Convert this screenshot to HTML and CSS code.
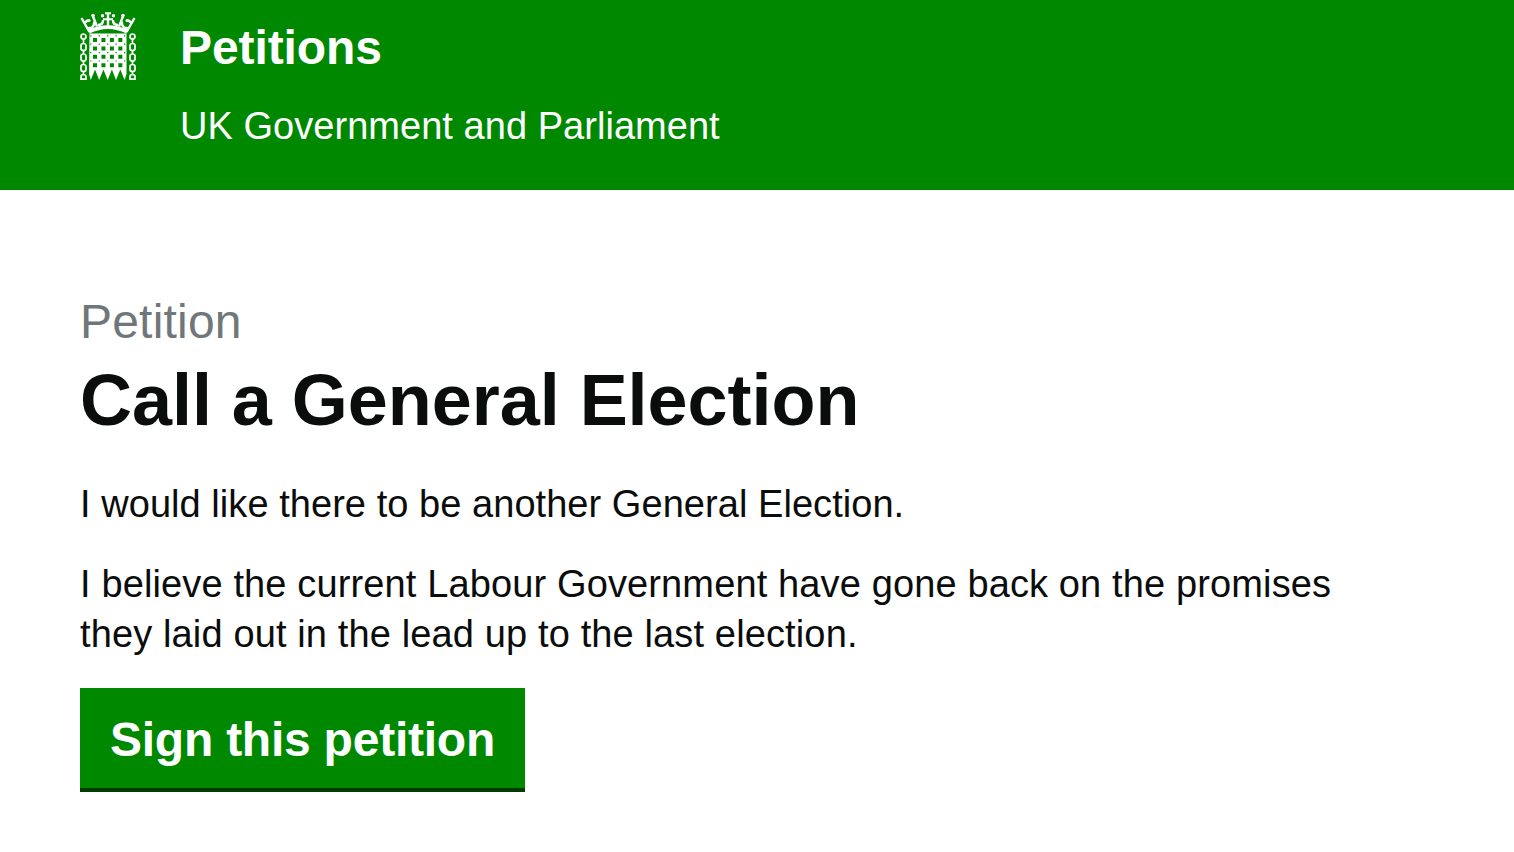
FILE: index.html
```html
<!DOCTYPE html>
<html lang="en">
<head>
    <meta charset="UTF-8">
    <meta name="viewport" content="width=device-width, initial-scale=1.0">
    <title>Call a General Election - Petitions</title>
    <link rel="stylesheet" href="styles.css">
</head>
<body>
    <header class="header">
        <svg class="logo" viewBox="0 0 56 68" aria-hidden="true">
            <!-- Crown -->
            <path fill="#fff" d="M9.500 21.500Q28 12.500 46.500 21.500L47.500 17.500Q28 9 8.500 17.500Z"/>
            <g fill="none" stroke="#fff" stroke-width="2.400">
                <path d="M1.500 6L9.500 20M54.500 6L46.500 20M28 1v13"/>
                <path d="M4 11.500l4-3.500M52 11.500l-4-3.500M7 16q6 1 7-4M49 16q-6 1-7-4M13 4.500l4 10M43 4.500l-4 10M18 13q5 0 5-5M38 13q-5 0-5-5"/>
                <path d="M25 1.200h6M23 7.300h10" stroke-width="2"/>
            </g>
            <g fill="#fff">
                <circle cx="9" cy="8.500" r="1.500"/><circle cx="47" cy="8.500" r="1.500"/>
                <circle cx="14.500" cy="11" r="1.800"/><circle cx="41.500" cy="11" r="1.800"/>
                <circle cx="22.500" cy="3.800" r="1.700"/><circle cx="33.500" cy="3.800" r="1.700"/>
                <circle cx="13" cy="3.500" r="1.800"/><circle cx="43" cy="3.500" r="1.800"/>
            </g>
            <!-- Grille -->
            <path fill="#fff" d="M9.500 21.500H46.500V62L44.600 68L40.300 57.500L36 68L31.900 57.500L27.700 68L23.400 57.500L19.200 68L15 57.500L10.800 68L9 62Z"/>
            <g fill="none" stroke="#008800">
                <path stroke-width="4" stroke-dasharray="4 4.450" d="M13 28H43M13 36.400H43M13 44.800H43M13 53.200H43"/>
                <path stroke-width="1.200" stroke-dasharray="1.200 7.250" d="M10.200 23.800H46M10.200 32.200H46M10.200 40.600H46M10.200 49H46"/>
            </g>
            <!-- Chains -->
            <g fill="none" stroke="#fff" stroke-width="1.700">
                <path d="M1 24.500a2.500 2.500 0 0 1 5 0a2.500 2.500 0 0 1-5 0M1 33.500a2.500 2 0 0 1 5 0v3a2.500 2 0 0 1-5 0zM1 44a2.500 2 0 0 1 5 0v3a2.500 2 0 0 1-5 0zM1 54.500a2.500 2 0 0 1 5 0v3a2.500 2 0 0 1-5 0zM1 64.500a2.500 2 0 0 1 5 0v2.600h-5zM3.500 27v5M3.500 38v4.500M3.500 48.500v4.500M3.500 59v4.500"/>
                <path d="M50 24.500a2.500 2.500 0 0 1 5 0a2.500 2.500 0 0 1-5 0M50 33.500a2.500 2 0 0 1 5 0v3a2.500 2 0 0 1-5 0zM50 44a2.500 2 0 0 1 5 0v3a2.500 2 0 0 1-5 0zM50 54.500a2.500 2 0 0 1 5 0v3a2.500 2 0 0 1-5 0zM50 64.500a2.500 2 0 0 1 5 0v2.600h-5zM52.500 27v5M52.500 38v4.500M52.500 48.500v4.500M52.500 59v4.500"/>
            </g>
        </svg>
        <div class="header-text">
            <a class="site-title">Petitions</a>
            <p class="tagline">UK Government and Parliament</p>
        </div>
    </header>

    <main class="content">
        <h1 class="page-title">
            <span class="title-label">Petition</span>
            Call a General Election
        </h1>
        <p class="summary">I would like there to be another General Election.</p>
        <p class="details">I believe the current Labour Government have gone back on the promises they laid out in the lead up to the last election.</p>
        <a class="button">Sign this petition</a>
    </main>
</body>
</html>
```
FILE: styles.css
```css
body {
    margin: 0;
    font-family: "Helvetica Neue", "Liberation Sans", Arial, sans-serif;
    font-size: 38px;
    line-height: 50px;
    color: #0b0c0c;
    background: #fff;
}
.header {
    display: flex;
    gap: 44px;
    box-sizing: border-box;
    height: 190px;
    padding: 12px 80px 0;
    background: #008800;
    color: #fff;
}
.logo {
    width: 56px;
    height: 68px;
}
.header-text {
    padding-top: 6px;
}
.site-title {
    display: block;
    font-size: 48px;
    line-height: 60px;
    font-weight: bold;
    letter-spacing: -0.1px;
}
.tagline {
    margin: 23px 0 0;
    letter-spacing: 0.04px;
}
.content {
    padding: 107px 80px 0;
}
.content p {
    max-width: 1300px;
    margin: 0 0 30px;
}
.page-title {
    margin: 0 0 39px;
    font-size: 72px;
    line-height: 80px;
    font-weight: bold;
    letter-spacing: -0.04px;
}
.title-label {
    display: block;
    margin-bottom: 13px;
    font-size: 48px;
    line-height: 50px;
    font-weight: normal;
    letter-spacing: 0.2px;
    color: #6f777b;
}
.summary {
    letter-spacing: 0.05px;
}
.content .details {
    margin-bottom: 29px;
    letter-spacing: 0.13px;
}
.button {
    display: inline-block;
    padding: 22px 30px 18px;
    font-size: 48px;
    line-height: 60px;
    font-weight: bold;
    letter-spacing: -0.24px;
    color: #fff;
    background: #008800;
    border-bottom: 4px solid #003c00;
}
```
